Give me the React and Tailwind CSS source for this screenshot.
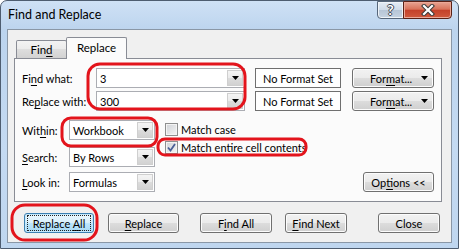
import React from "react";

const U = ({ children }) => (
  <span className="underline decoration-1 underline-offset-[2px]">{children}</span>
);

function Tri() {
  return (
    <svg width="7" height="4" viewBox="0 0 7 4">
      <path d="M0 0H7L3.5 4Z" fill="#000" />
    </svg>
  );
}

function Combo({ className, value }) {
  return (
    <div className={`flex h-[20px] border border-[#abadb3] bg-white ${className}`}>
      <div className="flex flex-1 items-center pl-[3px] leading-none">{value}</div>
      <div className="my-[1px] mr-[1px] flex w-[16px] items-center justify-center border border-[#cfcfcf] bg-[linear-gradient(#f4f4f4_0%,#ebebeb_49%,#dcdcdc_50%,#d2d2d2_100%)]">
        <Tri />
      </div>
    </div>
  );
}

function Btn({ className, children }) {
  return (
    <div
      className={`flex h-[20px] items-center rounded-[3px] border border-[#707070] bg-[linear-gradient(#f2f2f2_0%,#ebebeb_49%,#dddddd_50%,#cfcfcf_100%)] shadow-[inset_0_0_0_1px_#fcfcfc] leading-none ${className}`}
    >
      {children}
    </div>
  );
}

function Check({ checked }) {
  return (
    <div className="flex h-[13px] w-[13px] items-center justify-center border border-[#8e8f8f] bg-[linear-gradient(135deg,#d0d3d7_0%,#f4f4f4_100%)] shadow-[inset_0_0_0_1px_#f4f4f4]">
      {checked && (
        <svg width="11" height="11" viewBox="0 0 11 11">
          <path d="M2 5.5L4.5 8.5L9 2" fill="none" stroke="#4a5f97" strokeWidth="1.8" />
        </svg>
      )}
    </div>
  );
}

export default function App() {
  return (
    <div className="relative h-[249px] w-[459px] overflow-hidden font-['Lato',sans-serif] text-[11px] text-black">
      <div className="flex h-full w-full flex-col rounded-t-[7px] border border-[#4e5d70] bg-[linear-gradient(180deg,#cfe1f5_0%,#bcd4ee_12%,#c4daf2_60%,#bfd6ef_100%)]">
        {/* title bar */}
        <div className="flex h-[28px] items-start pr-[6px]">
          <div className="self-center whitespace-nowrap pl-[7px] pt-[1px] text-[12.5px] leading-none">Find and Replace</div>
          <div className="ml-auto flex h-[18px]">
            <div className="flex w-[27px] items-center justify-center rounded-bl-[4px] border border-[#56667a] bg-[linear-gradient(#e4ecf5_0%,#cfdbe8_50%,#b6c5d6_51%,#c6d3e1_100%)] shadow-[inset_0_0_0_1px_#eef3f8]">
              <span className="text-[14px] font-bold leading-none text-white [text-shadow:1px_0_#3d4650,-1px_0_#3d4650,0_1px_#3d4650,0_-1px_#3d4650]">?</span>
            </div>
            <div className="-ml-[1px] flex w-[49px] items-center justify-center rounded-br-[4px] border border-[#5a2116] bg-[linear-gradient(#e7a493_0%,#d8735b_45%,#c4412a_52%,#d0593d_100%)] shadow-[inset_0_0_0_1px_#eba898]">
              <svg width="14" height="12" viewBox="0 0 14 12">
                <path d="M3 2L11 10M11 2L3 10" stroke="#3a3a3a" strokeWidth="4.2" strokeLinecap="square" />
                <path d="M3 2L11 10M11 2L3 10" stroke="#ffffff" strokeWidth="2.2" strokeLinecap="square" />
              </svg>
            </div>
          </div>
        </div>

        {/* client */}
        <div className="mx-[6px] flex h-[214px] flex-col border border-[#8a97a6] bg-[#f0f0f0] pl-[6px]">
          {/* tabs */}
          <div className="mt-[7px] flex h-[22px] items-end pl-[2px]">
            <div className="mb-[1px] flex h-[18px] w-[51px] items-center justify-center rounded-t-[2px] border border-b-0 border-[#898c95] bg-[linear-gradient(#f3f3f3_0%,#ebebeb_49%,#dedede_50%,#d2d2d2_100%)] pt-[1px] text-[11.5px] leading-none">
              <span>
                Fin<U>d</U>
              </span>
            </div>
            <div className="relative z-10 -ml-[1px] flex h-[22px] w-[61px] items-center justify-center rounded-t-[2px] border border-b-0 border-[#898c95] bg-[#fbfbfb] pb-[2px] text-[11.5px] leading-none">
              Replace
            </div>
          </div>

          {/* panel */}
          <div className="-mt-[1px] h-[144px] w-[428px] border border-[#898c95] bg-[#fbfbfb] pl-[7px] pt-[9px]">
            <div className="flex h-[20px] items-center">
              <div className="w-[74px] whitespace-nowrap leading-none">
                Fi<U>n</U>d what:
              </div>
              <Combo className="w-[149px]" value="3" />
              <div className="ml-[10px] flex h-[20px] w-[86px] items-center justify-center whitespace-nowrap border border-[#6f6f6f] bg-white leading-none">
                No Format Set
              </div>
              <Btn className="ml-[11px] w-[82px] justify-between pl-[17px] pr-[5px]">
                <span>
                  For<U>m</U>at...
                </span>
                <Tri />
              </Btn>
            </div>
            <div className="mt-[3px] flex h-[20px] items-center">
              <div className="w-[74px] whitespace-nowrap leading-none">
                Re<U>p</U>lace with:
              </div>
              <Combo className="w-[149px]" value="300" />
              <div className="ml-[10px] flex h-[20px] w-[86px] items-center justify-center whitespace-nowrap border border-[#6f6f6f] bg-white leading-none">
                No Format Set
              </div>
              <Btn className="ml-[11px] w-[82px] justify-between pl-[17px] pr-[5px]">
                <span>
                  For<U>m</U>at...
                </span>
                <Tri />
              </Btn>
            </div>

            <div className="mt-[9px] flex items-start pr-[7px]">
              <div className="flex flex-col">
                <div className="flex h-[20px] items-center">
                  <div className="w-[47px] whitespace-nowrap leading-none">
                    Wit<U>h</U>in:
                  </div>
                  <Combo className="w-[86px]" value="Workbook" />
                </div>
                <div className="mt-[7px] flex h-[20px] items-center">
                  <div className="w-[47px] whitespace-nowrap leading-none">
                    <U>S</U>earch:
                  </div>
                  <Combo className="w-[86px]" value="By Rows" />
                </div>
                <div className="mt-[5px] flex h-[20px] items-center">
                  <div className="w-[47px] whitespace-nowrap leading-none">
                    <U>L</U>ook in:
                  </div>
                  <Combo className="w-[86px]" value="Formulas" />
                </div>
              </div>
              <div className="ml-[10px] flex flex-col pt-[3px]">
                <div className="flex h-[13px] items-center gap-[3px]">
                  <Check />
                  <span className="whitespace-nowrap leading-none">Match case</span>
                </div>
                <div className="mt-[5px] flex h-[13px] items-center gap-[3px]">
                  <Check checked />
                  <span className="whitespace-nowrap leading-none">
                    Match entire cell c<U>o</U>ntents
                  </span>
                </div>
              </div>
              <Btn className="ml-auto mt-[52px] h-[19px] w-[71px] justify-center">
                <span>
                  Op<U>t</U>ions &lt;&lt;
                </span>
              </Btn>
            </div>
          </div>

          {/* bottom buttons */}
          <div className="mt-[11px] flex items-center pl-[10px]">
            <div className="flex h-[20px] w-[70px] items-center justify-center rounded-[3px] border border-[#3c7fb1] bg-[linear-gradient(#eaf6fd_0%,#d9f0fc_49%,#bee6fd_50%,#a7d9f5_100%)] shadow-[inset_0_0_0_1px_#c4e8fc]">
              <div className="flex h-[14px] w-[62px] items-center justify-center outline-1 outline-dotted outline-[#222] leading-none">
                <span className="whitespace-nowrap">
                  Replace <U>A</U>ll
                </span>
              </div>
            </div>
            <Btn className="ml-[14px] w-[71px] justify-center">
              <span>
                <U>R</U>eplace
              </span>
            </Btn>
            <Btn className="ml-[21px] w-[72px] justify-center">
              <span>
                F<U>i</U>nd All
              </span>
            </Btn>
            <Btn className="ml-[13px] w-[62px] justify-center">
              <span className="whitespace-nowrap">
                <U>F</U>ind Next
              </span>
            </Btn>
            <Btn className="ml-[31px] w-[62px] justify-center">
              <span>Close</span>
            </Btn>
          </div>
        </div>
      </div>

      {/* red annotations */}
      <svg className="pointer-events-none absolute left-0 top-0" width="459" height="249" viewBox="0 0 459 249">
        <g fill="none" stroke="#e3141c" strokeWidth="3">
          <rect x="88" y="64" width="157" height="45" rx="12" />
          <rect x="62" y="118" width="95" height="28" rx="9" />
          <rect x="158" y="139" width="148" height="16" rx="7" />
          <rect x="12" y="205" width="85" height="35" rx="13" />
        </g>
      </svg>
    </div>
  );
}
